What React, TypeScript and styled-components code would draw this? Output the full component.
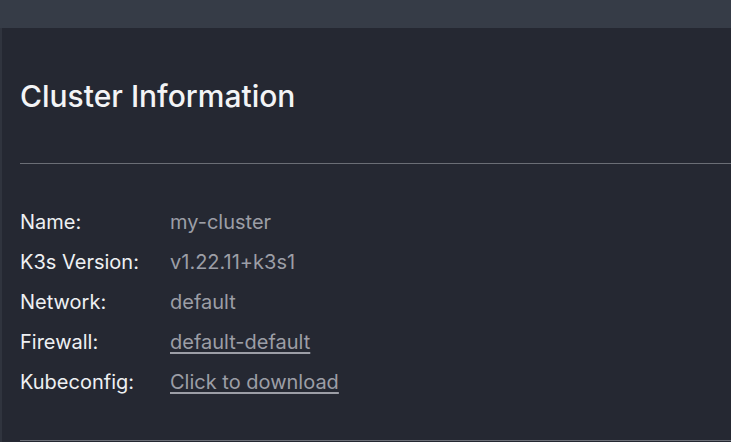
import React from "react";
import styled, { createGlobalStyle } from "styled-components";

const GlobalStyle = createGlobalStyle`
	html, body {
		margin: 0;
		padding: 0;
		background: #252832;
	}
	body {
		font-family: Inter, "Noto Sans", sans-serif;
	}
`;

const Page = styled.div`
	width: 731px;
	height: 442px;
	overflow: hidden;
	display: flex;
	flex-direction: column;
	background: #252832;
`;

const TopBar = styled.div`
	height: 28px;
	flex-shrink: 0;
	background: #363c47;
`;

const Panel = styled.section`
	flex: 1;
	border-left: 2px solid #30343e;
	padding: 0 0 0 18px;
	display: flex;
	flex-direction: column;
`;

const Title = styled.h1`
	margin: 0;
	padding-top: 50px;
	height: 135px;
	flex-shrink: 0;
	box-sizing: border-box;
	font-size: 30px;
	line-height: 36px;
	font-weight: 500;
	color: #f3f4f6;
`;

const Divider = styled.hr`
	margin: 0;
	border: none;
	height: 1px;
	flex-shrink: 0;
	background: #6b6e76;
`;

const List = styled.dl`
	margin: 0;
	padding: 46px 0 0;
	display: flex;
	flex-direction: column;
	gap: 16px;
	height: 276px;
	flex-shrink: 0;
	box-sizing: border-box;
`;

const Row = styled.div`
	display: flex;
	font-size: 20px;
	line-height: 24px;
`;

const Label = styled.dt`
	width: 150px;
	color: #eef0f3;
`;

const Value = styled.dd<{ $link?: boolean }>`
	margin: 0;
	color: #9c9ea6;
	text-decoration: ${({ $link }) => ($link ? "underline" : "none")};
	text-underline-offset: 3px;
	cursor: ${({ $link }) => ($link ? "pointer" : "default")};
`;

const info = [
	{ label: "Name:", value: "my-cluster" },
	{ label: "K3s Version:", value: "v1.22.11+k3s1" },
	{ label: "Network:", value: "default" },
	{ label: "Firewall:", value: "default-default", link: true },
	{ label: "Kubeconfig:", value: "Click to download", link: true },
];

const App = () => {
	return (
		<>
			<GlobalStyle />
			<Page>
				<TopBar />
				<Panel>
					<Title>Cluster Information</Title>
					<Divider />
					<List>
						{info.map((item) => (
							<Row key={item.label}>
								<Label>{item.label}</Label>
								<Value $link={item.link}>{item.value}</Value>
							</Row>
						))}
					</List>
					<Divider />
				</Panel>
			</Page>
		</>
	);
};

export default App;
